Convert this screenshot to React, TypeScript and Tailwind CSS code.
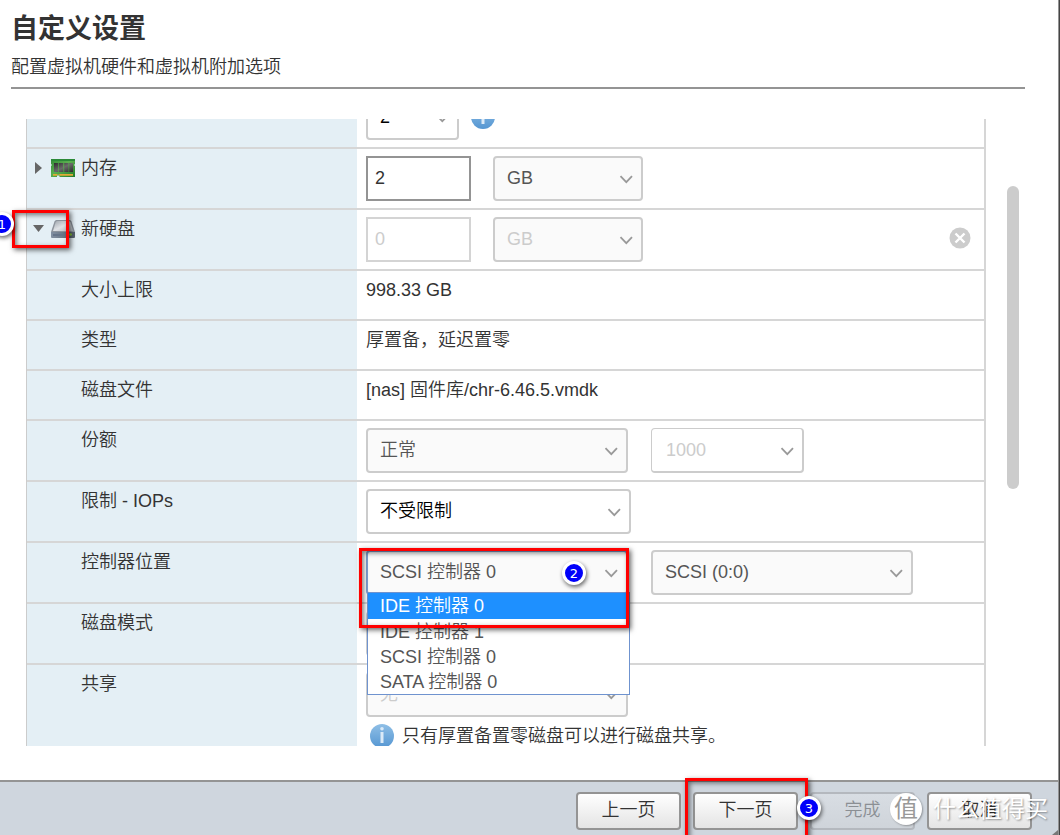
import React from "react";

const FONT = "font-['Liberation_Sans','Noto_Sans_CJK_SC',sans-serif]";

function Chevron() {
  return (
    <svg className="pointer-events-none absolute right-[10px] top-[19px]" width="14" height="9" viewBox="0 0 14 9" fill="none" stroke="#999" strokeWidth="1.8">
      <path d="M1.500 1.200 L7.300 7.200 L13 1.200" />
    </svg>
  );
}

type SelectProps = { label: string; value: string; width: string; tone?: string; box?: string };

function Select({ label, value, width, tone = "text-[#555]", box = "border-2 border-[#ccc] bg-[#fafafa] pl-[12px]" }: SelectProps) {
  return (
    <div className={`relative shrink-0 ${width}`}>
      <select aria-label={label} className={`block h-[45px] w-full appearance-none rounded-[4px] pr-8 text-[18px] outline-none ${box} ${tone}`}>
        <option>{value}</option>
      </select>
      <Chevron />
    </div>
  );
}

function InfoIcon() {
  return (
    <svg className="shrink-0" width="24" height="24" viewBox="0 0 24 24">
      <defs>
        <linearGradient id="info" x1="0" y1="0" x2="0" y2="1">
          <stop offset="0" stopColor="#8fbfe6" />
          <stop offset="1" stopColor="#5596d2" />
        </linearGradient>
      </defs>
      <circle cx="12" cy="12" r="12" fill="url(#info)" />
      <rect x="10.5" y="8" width="3" height="11" fill="#dbeaf7" />
      <circle cx="12" cy="4.8" r="1.8" fill="#dbeaf7" />
    </svg>
  );
}

function MemoryIcon() {
  return (
    <svg width="24" height="20" viewBox="0 0 24 20">
      <defs>
        <linearGradient id="mem" x1="0" y1="0" x2="1" y2="1">
          <stop offset="0" stopColor="#2f8a35" />
          <stop offset="0.45" stopColor="#5cb050" />
          <stop offset="1" stopColor="#1f7a28" />
        </linearGradient>
        <linearGradient id="chip" x1="0" y1="0" x2="1" y2="1">
          <stop offset="0" stopColor="#2c2c2c" />
          <stop offset="0.5" stopColor="#6a6a6a" />
          <stop offset="1" stopColor="#2c2c2c" />
        </linearGradient>
      </defs>
      <path d="M0 1h24v5l-1 1 1 1v11H8.500v-1.500H6V19H0V8l1-1-1-1z" fill="url(#mem)" />
      <path d="M0 1h24v2H0z" fill="#2b8a38" />
      <path d="M3 5h4.300v9H3zM8 5h4.300v9H8zM13.200 5h4.300v9h-4.300zM18.200 5h3.800v9h-3.800z" fill="url(#chip)" />
      <path d="M2 16h20v1.800H8.500v-1.300H6v1.300H2z" fill="#e0ab35" />
    </svg>
  );
}

function DiskIcon() {
  return (
    <svg width="24" height="20" viewBox="0 0 24 20">
      <defs>
        <linearGradient id="disk" x1="0" y1="0" x2="1" y2="1">
          <stop offset="0" stopColor="#9ea5ad" />
          <stop offset="0.5" stopColor="#dfe2e6" />
          <stop offset="1" stopColor="#aeb4bb" />
        </linearGradient>
        <linearGradient id="face" x1="0" y1="0" x2="1" y2="0">
          <stop offset="0" stopColor="#8291a3" />
          <stop offset="1" stopColor="#55606c" />
        </linearGradient>
      </defs>
      <path d="M5.500 1h13q1.500 0 2 1.500L24 13H0L3.500 2.500Q4 1 5.500 1z" fill="#8d949d" />
      <path d="M6 2h12q1 0 1.500 1.500L22 12H2L4.500 3.500Q5 2 6 2z" fill="url(#disk)" />
      <path d="M0 13h24v5q0 1-1 1H1q-1 0-1-1z" fill="url(#face)" />
      <path d="M2 15h11v2H2z" fill="#66758a" />
      <circle cx="19.500" cy="15.500" r="1.300" fill="#8bd12c" />
    </svg>
  );
}

function Badge({ n, place }: { n: number; place: string }) {
  return (
    <span className={`absolute z-30 flex size-[24px] items-center justify-center rounded-full border-[3px] border-white bg-[#0000fa] font-['DejaVu_Sans',sans-serif] text-[13px] font-normal leading-none text-white shadow-[1px_2px_4px_rgba(0,0,0,0.6)] ${place}`}>
      {n}
    </span>
  );
}

function Highlight({ place }: { place: string }) {
  return <span aria-hidden="true" className={`pointer-events-none absolute z-20 border-[3px] border-[#f00] shadow-[2px_2px_5px_rgba(0,0,0,0.6),inset_2px_2px_5px_rgba(0,0,0,0.5)] ${place}`} />;
}

type RowProps = { label?: React.ReactNode; icon?: React.ReactNode; height?: string; children?: React.ReactNode };

function Row({ label, icon, height = "min-h-[61px]", children }: RowProps) {
  return (
    <div className={`flex border-t-2 border-[#d6d6d6] ${height}`}>
      <div className="relative flex w-[330px] shrink-0 bg-[#e4eff5] pt-[6px]">
        <div className="flex h-[25px] w-[54px] shrink-0 items-center">{icon}</div>
        <span className="leading-[27px]">{label}</span>
      </div>
      <div className="relative min-w-0 flex-1 pl-[9px]">{children}</div>
    </div>
  );
}

function Controls({ children }: { children: React.ReactNode }) {
  return <div className="flex pt-[7px]">{children}</div>;
}

function TextRow({ label, value }: { label: string; value: string }) {
  return (
    <Row label={label} height="min-h-[50px]">
      <p className="pt-[6px] leading-[27px]">{value}</p>
    </Row>
  );
}

const FOOT_BUTTON = "h-[38px] w-[105px] rounded-[4px] border-2 pb-[2px] text-[18px]";
const FOOT_ACTIVE = "border-[#949494] bg-linear-to-b from-white to-[#e4e4e4]";

export default function App() {
  return (
    <div className="flex h-screen border-r border-[#444] bg-[#949494] pr-px">
      <div className={`flex min-w-0 flex-1 flex-col overflow-hidden bg-white text-[18px] font-[350] text-[#333] ${FONT}`}>
        <header className="ml-[11px] mr-[33px] border-b-2 border-[#949494] pb-[6px] pt-[9px]">
          <h1 className="text-[27px] font-bold leading-[40px]">自定义设置</h1>
          <p className="pt-[5px] leading-[27px]">配置虚拟机硬件和虚拟机附加选项</p>
        </header>

        <main className="mt-[30px] flex min-h-0 flex-1 pb-[34px]">
          <div className="min-w-0 flex-1 overflow-hidden pl-[26px]">
            <div className="-mt-[33px] border-l border-r-2 border-l-[#ccc] border-r-[#d6d6d6]">
              <Row>
                <Controls>
                  <Select label="CPU" value="2" width="w-[93px]" tone="text-black" box="border-2 border-[#ccc] bg-white pl-[12px]" />
                  <div className="pl-[12px] pt-[10px]"><InfoIcon /></div>
                </Controls>
              </Row>

              <Row
                label="内存"
                icon={
                  <>
                    <button aria-label="展开内存" className="w-[24px] pl-[8px]">
                      <svg className="block" width="7" height="12" viewBox="0 0 7 12"><path d="M0 0L7 6L0 12z" fill="#666" /></svg>
                    </button>
                    <MemoryIcon />
                  </>
                }
              >
                <Controls>
                  <input aria-label="内存大小" defaultValue="2" className="h-[45px] w-[105px] border-2 border-[#949494] pl-[7px] outline-none" />
                  <div className="w-[22px]" />
                  <Select label="内存单位" value="GB" width="w-[150px]" />
                </Controls>
              </Row>

              <Row
                label="新硬盘"
                icon={
                  <>
                    <button aria-label="折叠新硬盘" className="w-[24px] pl-[6px]">
                      <svg className="block" width="11" height="7" viewBox="0 0 11 7"><path d="M0 0H11L5.500 7z" fill="#666" /></svg>
                    </button>
                    <DiskIcon />
                    <Highlight place="left-[-15px] top-0 h-[38px] w-[57px]" />
                    <Badge n={1} place="left-[-37px] top-[2px]" />
                  </>
                }
              >
                <Controls>
                  <input aria-label="硬盘大小" disabled defaultValue="0" className="h-[45px] w-[105px] border-2 border-[#d4d4d4] pl-[7px] text-[#ccc]" />
                  <div className="w-[22px]" />
                  <Select label="硬盘单位" value="GB" width="w-[150px]" tone="text-[#ccc]" />
                  <button aria-label="移除硬盘" className="ml-auto mr-[13px] mt-[-4px]">
                    <svg width="22" height="22" viewBox="0 0 22 22">
                      <circle cx="11" cy="11" r="10.500" fill="#ccc" />
                      <path d="M6.500 6.500L15.500 15.500M15.500 6.500L6.500 15.500" stroke="#fff" strokeWidth="2.400" />
                    </svg>
                  </button>
                </Controls>
              </Row>

              <TextRow label="大小上限" value="998.33 GB" />
              <TextRow label="类型" value="厚置备，延迟置零" />
              <TextRow label="磁盘文件" value="[nas] 固件库/chr-6.46.5.vmdk" />

              <Row label="份额">
                <Controls>
                  <Select label="份额" value="正常" width="w-[262px]" />
                  <div className="w-[23px]" />
                  <Select label="份额值" value="1000" width="w-[153px]" tone="text-[#ccc]" box="border border-b-2 border-r-2 border-[#ccc] bg-white pl-[14px]" />
                </Controls>
              </Row>

              <Row label="限制 - IOPs">
                <Controls>
                  <Select label="限制 - IOPs" value="不受限制" width="w-[265px]" tone="text-black" box="border-2 border-[#ccc] bg-white pl-[12px]" />
                </Controls>
              </Row>

              <Row label="控制器位置">
                <Controls>
                  <Select label="控制器位置" value="SCSI 控制器 0" width="w-[262px]" box="border-2 border-[#7f9fd0] bg-[#fafafa] pl-[12px]" />
                  <div className="w-[23px]" />
                  <Select label="控制器插槽" value="SCSI (0:0)" width="w-[262px]" />
                </Controls>
                <ul role="listbox" aria-label="控制器位置" className="absolute left-[10px] top-[49px] z-10 w-[263px] border border-[#6f93cf] bg-white leading-[27px] text-[#555]">
                  <li role="option" aria-selected="true" className="h-[26px] bg-[#1e90ff] pl-[12px] text-white">IDE 控制器 0</li>
                  <li role="option" aria-selected="false" className="h-[25px] pl-[12px]">IDE 控制器 1</li>
                  <li role="option" aria-selected="false" className="h-[25px] pl-[12px]">SCSI 控制器 0</li>
                  <li role="option" aria-selected="false" className="h-[25px] pl-[12px]">SATA 控制器 0</li>
                </ul>
                <Highlight place="left-[2px] top-[5px] h-[80px] w-[270px]" />
                <Badge n={2} place="left-[205px] top-[18px]" />
              </Row>

              <Row label="磁盘模式">
                <Controls>
                  <Select label="磁盘模式" value="从属" width="w-[262px]" />
                </Controls>
              </Row>

              <Row label="共享" height="min-h-[100px]">
                <Controls>
                  <Select label="共享" value="无" width="w-[262px]" tone="text-[#ccc]" />
                </Controls>
                <p className="flex gap-[8px] pl-[4px] pt-[7px] leading-[24px]">
                  <InfoIcon />
                  只有厚置备置零磁盘可以进行磁盘共享。
                </p>
              </Row>
            </div>
          </div>
          <div className="w-[72px] shrink-0 pl-[21px] pt-[67px]">
            <div className="h-[303px] w-[12px] rounded-full bg-[#ccc]" />
          </div>
        </main>

        <footer className="relative flex h-[55px] shrink-0 gap-[12px] border-t-2 border-[#949494] bg-[#cfd6de] pr-[26px] pt-[10px]">
          <button className={`${FOOT_BUTTON} ${FOOT_ACTIVE} ml-auto`}>上一页</button>
          <div className="relative">
            <button className={`${FOOT_BUTTON} ${FOOT_ACTIVE}`}>下一页</button>
            <Highlight place="left-[-8px] top-[-14px] h-[64px] w-[123px]" />
            <Badge n={3} place="left-[104px] top-[4px]" />
          </div>
          <button disabled className={`${FOOT_BUTTON} border-[#b4b8be] bg-linear-to-b from-[#d8dde3] to-[#cfd4da] text-[#8b8f94]`}>完成</button>
          <button className={`${FOOT_BUTTON} ${FOOT_ACTIVE}`}>取消</button>
          <div className="pointer-events-none absolute right-[10px] top-[10px] z-20 flex items-center gap-[11px] font-normal text-white">
            <span className="flex size-[32px] items-center justify-center rounded-full bg-white text-[24px] leading-[32px] text-[#999] shadow-[1px_1px_2px_rgba(0,0,0,0.3)]">值</span>
            <span className="text-[23px] leading-[34px] [text-shadow:1px_1px_2px_rgba(0,0,0,0.4)]">什么值得买</span>
          </div>
          <svg className="absolute bottom-0 right-0" width="7" height="5" viewBox="0 0 7 5"><path d="M7 0V5H1z" fill="#777" /></svg>
        </footer>
      </div>
    </div>
  );
}
